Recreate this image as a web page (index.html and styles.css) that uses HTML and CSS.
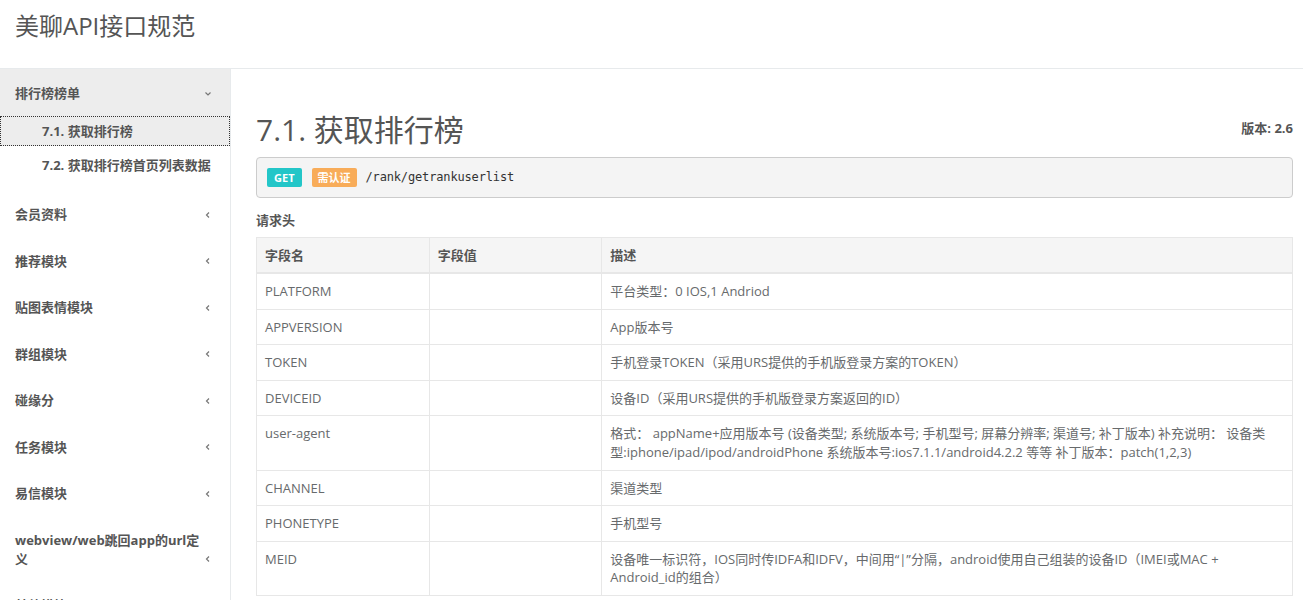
FILE: index.html
```html
<!DOCTYPE html>
<html lang="zh-CN">
<head>
<meta charset="utf-8">
<title>美聊API接口规范</title>
<link rel="stylesheet" href="styles.css">
</head>
<body>
<header class="topbar">
  <div class="brand">美聊API接口规范</div>
</header>
<div class="layout">
  <nav class="sidebar">
    <ul class="nav">
      <li class="group open">
        <div class="group-head"><span class="label">排行榜榜单</span><svg class="chev" width="8" height="8" viewBox="0 0 8 8"><polyline points="1.5,2.5 4,5 6.5,2.5" fill="none" stroke="#777" stroke-width="1.2"/></svg></div>
        <ul class="sub">
          <li><a class="sub-link active">7.1. 获取排行榜</a></li>
          <li><a class="sub-link">7.2. 获取排行榜首页列表数据</a></li>
        </ul>
      </li>
      <li class="group"><div class="group-head"><span class="label">会员资料</span><svg class="chev" width="8" height="8" viewBox="0 0 8 8"><polyline points="5,1.5 2.5,4 5,6.5" fill="none" stroke="#777" stroke-width="1.2"/></svg></div></li>
      <li class="group"><div class="group-head"><span class="label">推荐模块</span><svg class="chev" width="8" height="8" viewBox="0 0 8 8"><polyline points="5,1.5 2.5,4 5,6.5" fill="none" stroke="#777" stroke-width="1.2"/></svg></div></li>
      <li class="group"><div class="group-head"><span class="label">贴图表情模块</span><svg class="chev" width="8" height="8" viewBox="0 0 8 8"><polyline points="5,1.5 2.5,4 5,6.5" fill="none" stroke="#777" stroke-width="1.2"/></svg></div></li>
      <li class="group"><div class="group-head"><span class="label">群组模块</span><svg class="chev" width="8" height="8" viewBox="0 0 8 8"><polyline points="5,1.5 2.5,4 5,6.5" fill="none" stroke="#777" stroke-width="1.2"/></svg></div></li>
      <li class="group"><div class="group-head"><span class="label">碰缘分</span><svg class="chev" width="8" height="8" viewBox="0 0 8 8"><polyline points="5,1.5 2.5,4 5,6.5" fill="none" stroke="#777" stroke-width="1.2"/></svg></div></li>
      <li class="group"><div class="group-head"><span class="label">任务模块</span><svg class="chev" width="8" height="8" viewBox="0 0 8 8"><polyline points="5,1.5 2.5,4 5,6.5" fill="none" stroke="#777" stroke-width="1.2"/></svg></div></li>
      <li class="group"><div class="group-head"><span class="label">易信模块</span><svg class="chev" width="8" height="8" viewBox="0 0 8 8"><polyline points="5,1.5 2.5,4 5,6.5" fill="none" stroke="#777" stroke-width="1.2"/></svg></div></li>
      <li class="group"><div class="group-head"><span class="label">webview/web跳回app的url定义</span><svg class="chev" width="8" height="8" viewBox="0 0 8 8"><polyline points="5,1.5 2.5,4 5,6.5" fill="none" stroke="#777" stroke-width="1.2"/></svg></div></li>
      <li class="group"><div class="group-head"><span class="label">其他模块</span><svg class="chev" width="8" height="8" viewBox="0 0 8 8"><polyline points="5,1.5 2.5,4 5,6.5" fill="none" stroke="#777" stroke-width="1.2"/></svg></div></li>
    </ul>
  </nav>
  <main class="content">
    <div class="title-row">
      <h1 class="page-title">7.1. 获取排行榜</h1>
      <div class="version">版本: 2.6</div>
    </div>
    <div class="endpoint">
      <span class="badge badge-get">GET</span>
      <span class="badge badge-auth">需认证</span>
      <code class="path">/rank/getrankuserlist</code>
    </div>
    <h4 class="section-title">请求头</h4>
    <table class="params">
      <thead>
        <tr><th class="c1">字段名</th><th class="c2">字段值</th><th>描述</th></tr>
      </thead>
      <tbody>
        <tr><td>PLATFORM</td><td></td><td>平台类型：0 IOS,1 Andriod</td></tr>
        <tr><td>APPVERSION</td><td></td><td>App版本号</td></tr>
        <tr><td>TOKEN</td><td></td><td>手机登录TOKEN（采用URS提供的手机版登录方案的TOKEN）</td></tr>
        <tr><td>DEVICEID</td><td></td><td>设备ID（采用URS提供的手机版登录方案返回的ID）</td></tr>
        <tr><td>user-agent</td><td></td><td>格式： appName+应用版本号 (设备类型; 系统版本号; 手机型号; 屏幕分辨率; 渠道号; 补丁版本) 补充说明： 设备类型:iphone/ipad/ipod/androidPhone 系统版本号:ios7.1.1/android4.2.2 等等 补丁版本：patch(1,2,3)</td></tr>
        <tr><td>CHANNEL</td><td></td><td>渠道类型</td></tr>
        <tr><td>PHONETYPE</td><td></td><td>手机型号</td></tr>
        <tr><td>MEID</td><td></td><td>设备唯一标识符，IOS同时传IDFA和IDFV，中间用“|”分隔，android使用自己组装的设备ID（IMEI或MAC + Android_id的组合）</td></tr>
      </tbody>
    </table>
  </main>
</div>
</body>
</html>
```
FILE: styles.css
```css
html, body {
  margin: 0;
  padding: 0;
  height: 100%;
  overflow: hidden;
  background: #fff;
}
body {
  font-family: "Open Sans", "Noto Sans CJK SC", sans-serif;
  font-size: 13px;
  line-height: 1.42857;
  color: #676a6c;
}
.topbar {
  height: 69px;
  border-bottom: 1px solid #e7eaec;
  display: flex;
  align-items: center;
  padding: 0 15px 15px;
  box-sizing: border-box;
}
.brand {
  font-size: 24px;
  color: #555;
  line-height: 1.1;
}
.layout {
  display: flex;
  height: calc(100vh - 69px);
}
.sidebar {
  width: 230px;
  flex: none;
  border-right: 1px solid #e7eaec;
  overflow: hidden;
}
.nav, .sub {
  list-style: none;
  margin: 0;
  padding: 0;
}
.group-head {
  display: flex;
  justify-content: space-between;
  align-items: flex-end;
  padding: 14.5px 18px 13.5px 15px;
  font-weight: bold;
  color: #555;
}
.group-head .label {
  width: 192px;
}
.group-head .chev {
  flex: none;
  margin-bottom: 5px;
}
.group.open .group-head {
  background: #ededed;
}
.group.open .group-head .chev {
  margin-bottom: 4px;
}
.sub {
  padding-bottom: 7px;
}
.sub li {
  margin-bottom: 4px;
}
.sub-link {
  display: block;
  height: 30px;
  line-height: 30px;
  padding-left: 42px;
  font-weight: bold;
  color: #555;
  box-sizing: border-box;
}
.sub-link.active {
  background: #ededed;
  outline: 1px dotted #333;
  outline-offset: -1px;
}
.content {
  flex: 1;
  min-width: 0;
  padding: 44px 10px 0 25px;
  overflow: hidden;
}
.title-row {
  display: flex;
  justify-content: space-between;
  align-items: flex-start;
  margin-bottom: 11px;
}
.page-title {
  margin: 0;
  font-size: 30px;
  font-weight: normal;
  line-height: 33px;
  color: #555;
}
.version {
  font-weight: bold;
  color: #555;
  margin-top: 6px;
}
.endpoint {
  display: flex;
  align-items: center;
  height: 41px;
  box-sizing: border-box;
  padding: 0 10px;
  background: #f4f4f4;
  border: 1px solid #ccc;
  border-radius: 4px;
}
.badge {
  display: inline-block;
  height: 19px;
  line-height: 19px;
  padding: 0 7px;
  border-radius: 2px;
  color: #fff;
  font-size: 11px;
  font-weight: bold;
}
.badge-get {
  background: #23c6c8;
  margin-right: 10px;
}
.badge-auth {
  background: #f8ac59;
  padding: 0 6px;
  margin-right: 9px;
}
.path {
  font-family: "DejaVu Sans Mono", "Liberation Mono", monospace;
  font-size: 12px;
  letter-spacing: -0.15px;
  color: #333;
}
.section-title {
  margin: 13px 0 7px;
  font-size: 13px;
  font-weight: bold;
  color: #555;
}
.params {
  width: 100%;
  border-collapse: collapse;
  border: 1px solid #e7e7e7;
}
.params th, .params td {
  border: 1px solid #e7e7e7;
  padding: 8px;
  text-align: left;
  vertical-align: top;
  line-height: 1.42857;
}
.params th {
  background: #f5f5f5;
  font-weight: bold;
  color: #555;
  border-bottom-width: 2px;
}
.params .c1, .params .c2 {
  width: 16.6667%;
}
.params td {
  color: #676a6c;
}
```
